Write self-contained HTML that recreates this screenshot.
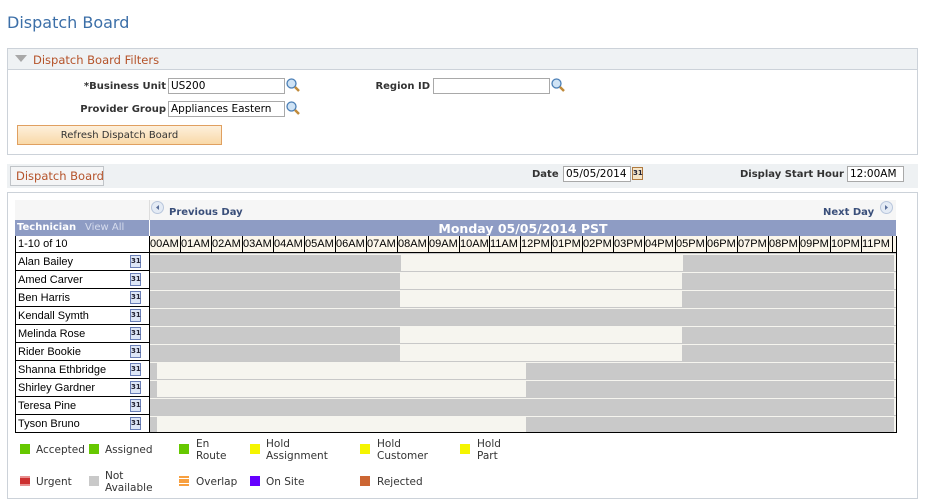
<!DOCTYPE html>
<html><head><meta charset="utf-8"><style>
*{margin:0;padding:0;box-sizing:border-box}
body{width:925px;height:503px;background:#fff;font-family:"DejaVu Sans","Liberation Sans",sans-serif;font-size:10px;color:#000;position:relative;overflow:hidden}
.a{position:absolute;white-space:nowrap}
.lbl{font-weight:bold;color:#333;font-size:10px}
.inp{position:absolute;border:1px solid #a9a9a9;background:#fff;height:16px;font-size:10.5px;padding:1px 2px;color:#000;line-height:13px}
.mag{position:absolute;width:14px;height:14px}
.cal{position:absolute;width:11px;height:13px;border:1px solid #6b80b8;background:#dde6f6;font-size:7px;font-weight:bold;color:#223;line-height:11px;text-align:center}
.row{position:absolute;left:15px;width:882px;height:18px}
.nm{position:absolute;left:0;top:0;width:135px;height:18px;border-left:1px solid #000;border-right:1px solid #000;border-bottom:1px solid #000;padding-left:2px;padding-top:1px;font-family:"Liberation Sans",sans-serif;font-size:11px;line-height:17px}
.tl{position:absolute;left:135px;top:0;width:746px;height:18px;background:#f6f5ef;border-top:1px solid #c8c8c8}
.g{position:absolute;top:1px;height:16px;background:#c9c9c9}
.hr{position:absolute;top:236px;height:17px;width:31px;border-right:1px solid #000;font-family:"Liberation Sans",sans-serif;font-size:11px;line-height:17px;background:#fbf6ea;text-align:left}
.lg{position:absolute;font-size:10.5px;color:#333;line-height:12px}
.sq{position:absolute;width:10px;height:10px}
</style></head><body>
<div class="a" style="left:7px;top:13px;font-size:16px;color:#3c6fa8">Dispatch Board</div>

<div class="a" style="left:7px;top:48px;width:911px;height:107px;border:1px solid #ccd2d9"></div>
<div class="a" style="left:8px;top:49px;width:909px;height:21px;background:#eff2f4;border-bottom:1px solid #ccd2d9"></div>
<div class="a" style="left:15px;top:55px;width:0;height:0;border-left:6px solid transparent;border-right:6px solid transparent;border-top:7px solid #a8a8a8"></div>
<div class="a" style="left:33px;top:53px;font-size:11.5px;color:#b5532a">Dispatch Board Filters</div>

<div class="a lbl" style="right:759px;top:81px">*Business Unit</div>
<div class="inp" style="left:168px;top:78px;width:117px">US200</div>
<svg class="mag" style="left:286px;top:78px" viewBox="0 0 14 14"><circle cx="5.5" cy="5.5" r="4.5" fill="#cfe3f5" stroke="#4a7eb5" stroke-width="1.3"/><path d="M9 9l4 4" stroke="#c08a3a" stroke-width="2.5"/></svg>
<div class="a lbl" style="right:495px;top:81px">Region ID</div>
<div class="inp" style="left:433px;top:78px;width:117px"></div>
<svg class="mag" style="left:551px;top:78px" viewBox="0 0 14 14"><circle cx="5.5" cy="5.5" r="4.5" fill="#cfe3f5" stroke="#4a7eb5" stroke-width="1.3"/><path d="M9 9l4 4" stroke="#c08a3a" stroke-width="2.5"/></svg>

<div class="a lbl" style="right:759px;top:104px">Provider Group</div>
<div class="inp" style="left:168px;top:101px;width:117px">Appliances Eastern</div>
<svg class="mag" style="left:286px;top:101px" viewBox="0 0 14 14"><circle cx="5.5" cy="5.5" r="4.5" fill="#cfe3f5" stroke="#4a7eb5" stroke-width="1.3"/><path d="M9 9l4 4" stroke="#c08a3a" stroke-width="2.5"/></svg>

<div class="a" style="left:17px;top:125px;width:205px;height:20px;border:1px solid #e0a060;background:linear-gradient(#fdf0dc,#f9d9a8);text-align:center;line-height:19px;color:#333">Refresh Dispatch Board</div>

<div class="a" style="left:7px;top:164px;width:911px;height:24px;background:#eef1f3"></div>
<div class="a" style="left:10px;top:166px;width:94px;height:20px;border:1px solid #c0c4c8;background:#f4f5f6;color:#b5532a;font-size:11.5px;padding-left:5px;line-height:19px">Dispatch Board</div>
<div class="a lbl" style="left:532px;top:169px">Date</div>
<div class="inp" style="left:563px;top:166px;width:68px">05/05/2014</div>
<div class="cal" style="left:632px;top:167px;border-color:#b07a40;background:#f5e5c8">31</div>
<div class="a lbl" style="left:740px;top:169px">Display Start Hour</div>
<div class="inp" style="left:847px;top:166px;width:57px">12:00AM</div>

<div class="a" style="left:7px;top:192px;width:911px;height:307px;border:1px solid #ccd2d9"></div>
<div class="a" style="left:15px;top:200px;width:881px;height:20px;background:#f6f6f6"></div>
<div class="a" style="left:149px;top:200px;width:1px;height:20px;background:#ddd"></div>
<svg class="a" style="left:151px;top:201px" width="13" height="13" viewBox="0 0 13 13"><circle cx="6.5" cy="6.5" r="6" fill="#e4ebf5" stroke="#b8c6dc"/><path d="M8 4v5L5 6.5z" fill="#5a6f9a"/></svg>
<div class="a" style="left:169px;top:207px;font-weight:bold;color:#3a4f7a">Previous Day</div>
<div class="a" style="left:823px;top:207px;font-weight:bold;color:#3a4f7a">Next Day</div>
<svg class="a" style="left:880px;top:201px" width="13" height="13" viewBox="0 0 13 13"><circle cx="6.5" cy="6.5" r="6" fill="#e4ebf5" stroke="#b8c6dc"/><path d="M5 4v5l3-2.5z" fill="#5a6f9a"/></svg>

<div class="a" style="left:15px;top:220px;width:134px;height:16px;background:#8e9cc4"></div>
<div class="a" style="left:17px;top:222px;font-weight:bold;color:#fff">Technician</div>
<div class="a" style="left:85px;top:222px;color:#d6dced">View All</div>
<div class="a" style="left:150px;top:220px;width:746px;height:16px;background:#8e9cc4;text-align:center;color:#fff;font-weight:bold;font-size:12.5px;line-height:17px">Monday 05/05/2014 PST</div>

<div class="a" style="left:15px;top:236px;width:135px;height:17px;border:1px solid #000;border-bottom:none;border-top:none;font-family:'Liberation Sans',sans-serif;font-size:11px;padding-left:2px;line-height:17px">1-10 of 10</div>
<div class="a" style="left:150px;top:236px;width:746px;height:17px;background:#fbf6ea"></div>
<div id="hrs"></div>
<div class="a" style="left:15px;top:252px;width:882px;height:1px;background:#000"></div>
<div class="a" style="left:896px;top:236px;width:1px;height:197px;background:#000"></div>

<div class="row" style="top:253px"><div class="nm">Alan Bailey</div><div class="tl"><div class="g" style="left:0;width:251px"></div><div class="g" style="left:533px;width:211px"></div></div></div>
<div class="row" style="top:271px"><div class="nm">Amed Carver</div><div class="tl"><div class="g" style="left:0;width:250px"></div><div class="g" style="left:532px;width:212px"></div></div></div>
<div class="row" style="top:289px"><div class="nm">Ben Harris</div><div class="tl"><div class="g" style="left:0;width:250px"></div><div class="g" style="left:532px;width:212px"></div></div></div>
<div class="row" style="top:307px"><div class="nm">Kendall Symth</div><div class="tl"><div class="g" style="left:0;width:744px"></div></div></div>
<div class="row" style="top:325px"><div class="nm">Melinda Rose</div><div class="tl"><div class="g" style="left:0;width:250px"></div><div class="g" style="left:532px;width:212px"></div></div></div>
<div class="row" style="top:343px"><div class="nm">Rider Bookie</div><div class="tl"><div class="g" style="left:0;width:250px"></div><div class="g" style="left:532px;width:212px"></div></div></div>
<div class="row" style="top:361px"><div class="nm">Shanna Ethbridge</div><div class="tl"><div class="g" style="left:0;width:7px"></div><div class="g" style="left:376px;width:368px"></div></div></div>
<div class="row" style="top:379px"><div class="nm">Shirley Gardner</div><div class="tl"><div class="g" style="left:0;width:7px"></div><div class="g" style="left:376px;width:368px"></div></div></div>
<div class="row" style="top:397px"><div class="nm">Teresa Pine</div><div class="tl"><div class="g" style="left:0;width:744px"></div></div></div>
<div class="row" style="top:415px"><div class="nm">Tyson Bruno</div><div class="tl"><div class="g" style="left:0;width:7px"></div><div class="g" style="left:376px;width:368px"></div></div></div>
<div class="a" style="left:15px;top:432px;width:882px;height:1px;background:#000"></div>

<div class="cal" style="left:130px;top:255px">31</div>
<div class="cal" style="left:130px;top:273px">31</div>
<div class="cal" style="left:130px;top:291px">31</div>
<div class="cal" style="left:130px;top:309px">31</div>
<div class="cal" style="left:130px;top:327px">31</div>
<div class="cal" style="left:130px;top:345px">31</div>
<div class="cal" style="left:130px;top:363px">31</div>
<div class="cal" style="left:130px;top:381px">31</div>
<div class="cal" style="left:130px;top:399px">31</div>
<div class="cal" style="left:130px;top:417px">31</div>

<div class="sq" style="left:20px;top:444px;background:#66c800"></div><div class="lg" style="left:36px;top:444px">Accepted</div>
<div class="sq" style="left:89px;top:444px;background:#66c800"></div><div class="lg" style="left:105px;top:444px">Assigned</div>
<div class="sq" style="left:179px;top:444px;background:#66c800"></div><div class="lg" style="left:196px;top:438px">En<br>Route</div>
<div class="sq" style="left:250px;top:444px;background:#f5f500"></div><div class="lg" style="left:266px;top:438px">Hold<br>Assignment</div>
<div class="sq" style="left:360px;top:444px;background:#f5f500"></div><div class="lg" style="left:377px;top:438px">Hold<br>Customer</div>
<div class="sq" style="left:460px;top:444px;background:#f5f500"></div><div class="lg" style="left:477px;top:438px">Hold<br>Part</div>

<div class="sq" style="left:20px;top:476px;background:linear-gradient(#e89090 0 2px,#cc3030 2px 8px,#e89090 8px)"></div><div class="lg" style="left:36px;top:476px">Urgent</div>
<div class="sq" style="left:89px;top:476px;background:#c9c9c9"></div><div class="lg" style="left:105px;top:470px">Not<br>Available</div>
<div class="sq" style="left:179px;top:476px;background:linear-gradient(#f8a040 0 2px,#fff 2px 3px,#f8a040 3px 7px,#fff 7px 8px,#f8a040 8px)"></div><div class="lg" style="left:196px;top:476px">Overlap</div>
<div class="sq" style="left:250px;top:476px;background:#6600ff"></div><div class="lg" style="left:266px;top:476px">On Site</div>
<div class="sq" style="left:360px;top:476px;background:#cc6633"></div><div class="lg" style="left:377px;top:476px">Rejected</div>

<script>
var h=document.getElementById('hrs'),s='';
var L=['00AM','01AM','02AM','03AM','04AM','05AM','06AM','07AM','08AM','09AM','10AM','11AM','12PM','01PM','02PM','03PM','04PM','05PM','06PM','07PM','08PM','09PM','10PM','11PM'];
for(var i=0;i<24;i++){var x=150+Math.round(i*30.95);var w=150+Math.round((i+1)*30.95)-x;s+='<div class="hr" style="left:'+x+'px;width:'+w+'px">'+L[i]+'</div>';}
h.outerHTML=s;
</script>
</body></html>
